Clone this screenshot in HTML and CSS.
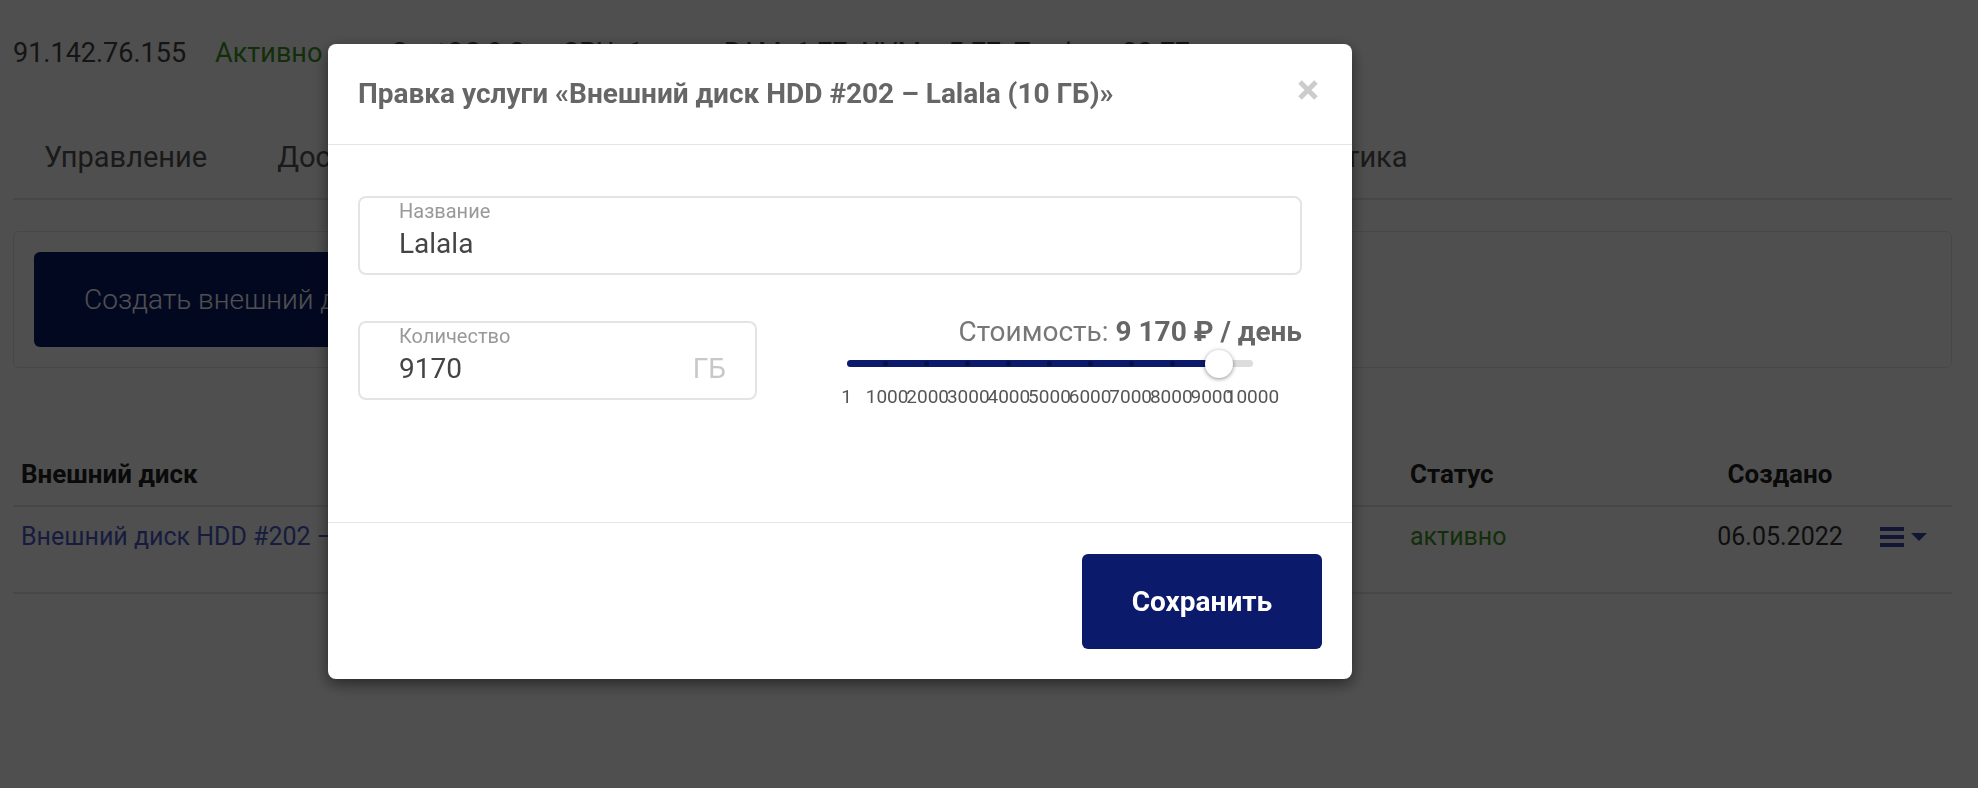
FILE: index.html
```html
<!DOCTYPE html>
<html lang="ru">
<head>
    <meta charset="UTF-8">
    <meta name="viewport" content="width=device-width, initial-scale=1.0">
    <title>Внешние диски</title>
    <link rel="stylesheet" href="styles.css">
</head>
<body>
    <div class="page">
        <div class="server-info">
            <span class="ip">91.142.76.155</span>
            <span class="state">Активно</span>
            <span class="os">
                <svg class="os-icon" viewBox="0 0 20 20" width="20" height="20">
                    <path d="M10 1 L12.4 7.6 L19 10 L12.4 12.4 L10 19 L7.6 12.4 L1 10 L7.6 7.6 Z" fill="#e9a23b"/>
                </svg>
                CentOS 8.3
            </span>
            <span class="spec">CPU: <b>1 ядро</b>, RAM: <b>1 ГБ</b>, NVMe: <b>5 ГБ</b>, Трафик: <b>20 ГБ</b></span>
        </div>

        <nav class="tabs">
            <a href="#" class="tab">Управление</a>
            <a href="#" class="tab">Доступ</a>
            <a href="#" class="tab">Снапшоты</a>
            <a href="#" class="tab active">Внешние диски</a>
            <a href="#" class="tab">Резервные копии</a>
            <a href="#" class="tab">Статистика</a>
        </nav>

        <div class="card">
            <button class="create-button">Создать внешний диск</button>
        </div>

        <div class="disk-table">
            <div class="disk-row disk-head">
                <div>Внешний диск</div>
                <div>Статус</div>
                <div class="col-date">Создано</div>
                <div></div>
            </div>
            <div class="disk-row">
                <div><a href="#" class="disk-link">Внешний диск HDD #202 – Lalala (10 ГБ)</a></div>
                <div class="status-active">активно</div>
                <div class="col-date">06.05.2022</div>
                <div class="actions">
                    <svg viewBox="0 0 24 20" width="24" height="20">
                        <rect x="0" y="0" width="24" height="4" fill="#3949ab"/>
                        <rect x="0" y="8" width="24" height="4" fill="#3949ab"/>
                        <rect x="0" y="16" width="24" height="4" fill="#3949ab"/>
                    </svg>
                    <svg viewBox="0 0 16 8" width="16" height="8">
                        <path d="M0 0 L16 0 L8 8 Z" fill="#3949ab"/>
                    </svg>
                </div>
            </div>
        </div>
    </div>

    <div class="overlay">
        <div class="modal">
            <div class="modal-header">
                <h3>Правка услуги «Внешний диск HDD #202 – Lalala (10 ГБ)»</h3>
                <button class="close-button" aria-label="Закрыть">
                    <svg viewBox="0 0 22 22" width="22" height="22">
                        <path d="M3 3 L19 19 M19 3 L3 19" stroke="#cccccc" stroke-width="5"/>
                    </svg>
                </button>
            </div>

            <div class="modal-body">
                <label class="field">
                    <span class="field-label">Название</span>
                    <input class="field-input" type="text" value="Lalala">
                </label>

                <div class="size-row">
                    <label class="field">
                        <span class="field-label">Количество</span>
                        <span class="field-line">
                            <input class="field-input" type="text" value="9170">
                            <span class="field-unit">ГБ</span>
                        </span>
                    </label>

                    <div class="price-box">
                        <div class="price">Стоимость: <b>9 170 ₽ / день</b></div>
                        <div class="slider">
                            <div class="slider-track">
                                <div class="slider-fill" style="width: 91.7%"></div>
                                <div class="slider-dots">
                                    <i></i><i></i><i></i><i></i><i></i><i></i><i></i><i></i><i></i>
                                </div>
                            </div>
                            <div class="slider-thumb" style="left: 91.7%"></div>
                        </div>
                        <div class="slider-scale">
                            <span>1</span>
                            <span>1000</span>
                            <span>2000</span>
                            <span>3000</span>
                            <span>4000</span>
                            <span>5000</span>
                            <span>6000</span>
                            <span>7000</span>
                            <span>8000</span>
                            <span>9000</span>
                            <span>10000</span>
                        </div>
                    </div>
                </div>
            </div>

            <div class="modal-footer">
                <button class="save-button">Сохранить</button>
            </div>
        </div>
    </div>
</body>
</html>
```

FILE: styles.css
```css
body {
    font-family: Roboto, "Liberation Sans", sans-serif;
    background-color: #ffffff;
    color: #333;
    margin: 0;
    padding: 0;
}

.page {
    padding: 0 26px 0 13px;
}

/* server summary line */
.server-info {
    display: flex;
    align-items: center;
    gap: 29px;
    padding-top: 37px;
    font-size: 27px;
    line-height: 32px;
    color: #444;
}

.state {
    color: #3f9424;
}

.os {
    display: flex;
    align-items: center;
    gap: 10px;
    margin-left: 9px;
}

.spec {
    margin-left: 8px;
}

.spec b {
    font-weight: 700;
}

/* tabs */
.tabs {
    display: flex;
    margin-top: 40px;
    border-bottom: 2px solid #e4e4e4;
}

.tab {
    padding: 32px 39px 25px 31px;
    font-size: 29px;
    line-height: 32px;
    color: #555;
    text-decoration: none;
}

/* create card */
.card {
    margin-top: 31px;
    padding: 20px;
    border: 1px solid #e6e6e6;
    border-radius: 6px;
}

.create-button {
    height: 95px;
    padding: 0 50px;
    border: none;
    border-radius: 6px;
    background-color: #0b1a6b;
    color: #ffffff;
    font-family: inherit;
    font-size: 28px;
    font-weight: 300;
}

/* disks table */
.disk-table {
    margin-top: 77px;
    font-size: 25px;
    line-height: 30px;
}

.disk-row {
    display: grid;
    grid-template-columns: 1389px 288px 180px 1fr;
    border-bottom: 2px solid #e6e6e6;
}

.disk-row > div {
    padding: 15px 8px 40px;
}

.disk-head > div {
    padding: 14px 8px 16px;
    font-size: 26px;
    font-weight: 700;
    color: #222;
}

.col-date {
    text-align: center;
}

.disk-link {
    color: #4a5cc8;
    text-decoration: none;
}

.status-active {
    color: #3f9424;
}

.disk-row > .actions {
    display: flex;
    align-items: center;
    gap: 7px;
    height: 30px;
    padding-left: 10px;
}

/* modal */
.overlay {
    position: fixed;
    top: 0;
    left: 0;
    right: 0;
    bottom: 0;
    background: rgba(0, 0, 0, 0.69);
}

.modal {
    position: absolute;
    top: 44px;
    left: 328px;
    width: 1024px;
    background: #ffffff;
    border-radius: 8px;
    box-shadow: 0 5px 15px rgba(0, 0, 0, 0.5);
}

.modal-header {
    display: flex;
    justify-content: space-between;
    align-items: center;
    height: 100px;
    padding: 0 33px 0 30px;
    border-bottom: 1px solid #e5e5e5;
}

.modal-header h3 {
    margin: 0;
    font-size: 28px;
    line-height: 32px;
    font-weight: 700;
    color: #666;
}

.close-button {
    display: flex;
    padding: 0;
    border: none;
    background: none;
    cursor: pointer;
    margin-top: -8px;
}

.modal-body {
    padding: 51px 50px 114px 30px;
    border-bottom: 1px solid #e5e5e5;
}

.field {
    display: block;
    box-sizing: border-box;
    height: 79px;
    padding: 3px 29px 0 39px;
    border: 2px solid #e4e4e4;
    border-radius: 8px;
}

.field-label {
    display: block;
    font-size: 20px;
    line-height: 20px;
    color: #999;
}

.field-input {
    display: block;
    width: 100%;
    height: 32px;
    margin-top: 7px;
    padding: 0;
    border: none;
    outline: none;
    font-family: inherit;
    font-size: 28px;
    line-height: 32px;
    color: #444;
    background: transparent;
}

.field-line {
    display: flex;
    align-items: center;
    margin-top: 7px;
}

.field-line .field-input {
    margin-top: 0;
    flex: 1;
}

.field-unit {
    font-size: 28px;
    line-height: 32px;
    color: #c8c8c8;
}

.size-row {
    display: grid;
    grid-template-columns: 399px 1fr;
    gap: 40px;
    margin-top: 46px;
}

.price-box {
    display: flex;
    flex-direction: column;
    align-items: center;
}

.price {
    align-self: stretch;
    margin-top: -5px;
    text-align: right;
    font-size: 28px;
    line-height: 32px;
    color: #777;
}

.price b {
    color: #666;
}

.slider {
    position: relative;
    width: 406px;
    height: 28px;
    margin-top: 2px;
}

.slider-track {
    position: absolute;
    top: 10px;
    left: 0;
    right: 0;
    height: 7px;
    border-radius: 4px;
    background: #dcdcdc;
    overflow: hidden;
}

.slider-fill {
    height: 100%;
    background: #0b1a6b;
}

.slider-dots {
    position: absolute;
    top: 1px;
    left: 0;
    right: 0;
    display: flex;
    justify-content: space-evenly;
}

.slider-dots i {
    width: 5px;
    height: 5px;
    border-radius: 50%;
    background: #061048;
}

.slider-thumb {
    position: absolute;
    top: 0;
    width: 28px;
    height: 28px;
    margin-left: -14px;
    border-radius: 50%;
    background: #ffffff;
    box-shadow: 0 1px 4px rgba(0, 0, 0, 0.45);
}

.slider-scale {
    display: flex;
    width: 446.6px;
    margin-top: 8px;
    font-size: 19px;
    line-height: 22px;
    color: #555;
}

.slider-scale span {
    display: flex;
    justify-content: center;
    width: 40.6px;
    white-space: nowrap;
}

.modal-footer {
    display: flex;
    justify-content: flex-end;
    padding: 31px 30px 30px;
}

.save-button {
    width: 240px;
    height: 95px;
    border: none;
    border-radius: 6px;
    background-color: #0b1a6b;
    color: #ffffff;
    font-family: inherit;
    font-size: 28px;
    font-weight: 700;
    cursor: pointer;
}
```
